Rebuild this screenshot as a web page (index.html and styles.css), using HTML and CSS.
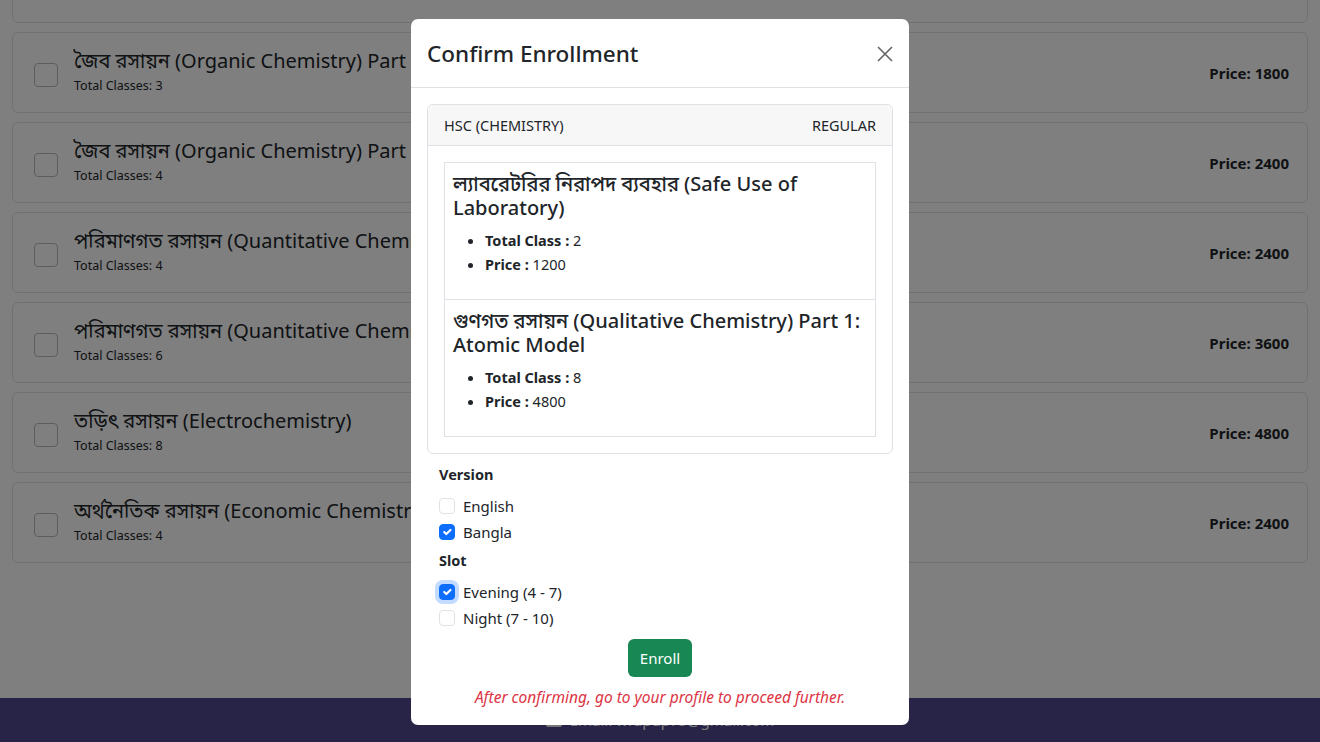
FILE: index.html
```html
<!DOCTYPE html>
<html lang="en">
<head>
  <meta charset="UTF-8">
  <meta name="viewport" content="width=device-width, initial-scale=1.0">
  <title>Course List - Enroll</title>
  <link rel="stylesheet" href="styles.css">
</head>
<body>
  <div class="page">
    <main class="course-list">
      <div class="course-card">
        <span class="box"></span>
        <div class="course-info">
          <div class="course-title">জৈব রসায়ন (Organic Chemistry) Part 1: Basics</div>
          <div class="course-sub">Total Classes: 4</div>
        </div>
        <div class="course-price">Price: 2400</div>
      </div>
      <div class="course-card">
        <span class="box"></span>
        <div class="course-info">
          <div class="course-title">জৈব রসায়ন (Organic Chemistry) Part 2: Reactions</div>
          <div class="course-sub">Total Classes: 3</div>
        </div>
        <div class="course-price">Price: 1800</div>
      </div>
      <div class="course-card">
        <span class="box"></span>
        <div class="course-info">
          <div class="course-title">জৈব রসায়ন (Organic Chemistry) Part 3: Polymers</div>
          <div class="course-sub">Total Classes: 4</div>
        </div>
        <div class="course-price">Price: 2400</div>
      </div>
      <div class="course-card">
        <span class="box"></span>
        <div class="course-info">
          <div class="course-title">পরিমাণগত রসায়ন (Quantitative Chemistry) Part 1</div>
          <div class="course-sub">Total Classes: 4</div>
        </div>
        <div class="course-price">Price: 2400</div>
      </div>
      <div class="course-card">
        <span class="box"></span>
        <div class="course-info">
          <div class="course-title">পরিমাণগত রসায়ন (Quantitative Chemistry) Part 2</div>
          <div class="course-sub">Total Classes: 6</div>
        </div>
        <div class="course-price">Price: 3600</div>
      </div>
      <div class="course-card">
        <span class="box"></span>
        <div class="course-info">
          <div class="course-title">তড়িৎ রসায়ন (Electrochemistry)</div>
          <div class="course-sub">Total Classes: 8</div>
        </div>
        <div class="course-price">Price: 4800</div>
      </div>
      <div class="course-card">
        <span class="box"></span>
        <div class="course-info">
          <div class="course-title">অর্থনৈতিক রসায়ন (Economic Chemistry)</div>
          <div class="course-sub">Total Classes: 4</div>
        </div>
        <div class="course-price">Price: 2400</div>
      </div>
    </main>

    <footer class="site-footer">
      <span class="mail-icon"></span>
      <span>Email: wrapup75@gmail.com</span>
    </footer>
  </div>

  <!-- modal -->
  <div class="backdrop"></div>
  <div class="modal-wrap">
    <div class="modal">
      <div class="modal-header">
        <h2 class="modal-title">Confirm Enrollment</h2>
        <button class="close-btn" aria-label="Close">
          <svg width="16" height="16" viewBox="0 0 16 16">
            <path d="M1 1 L15 15 M15 1 L1 15" stroke="#000" stroke-width="1.6" fill="none"/>
          </svg>
        </button>
      </div>
      <div class="modal-body">
        <div class="summary-card">
          <div class="summary-head">
            <span>HSC (CHEMISTRY)</span>
            <span>REGULAR</span>
          </div>
          <div class="summary-body">
            <div class="chapter">
              <h5>ল্যাবরেটরির নিরাপদ ব্যবহার (Safe Use of Laboratory)</h5>
              <ul>
                <li><b>Total Class :</b> 2</li>
                <li><b>Price :</b> 1200</li>
              </ul>
            </div>
            <div class="chapter">
              <h5>গুণগত রসায়ন (Qualitative Chemistry) Part 1: Atomic Model</h5>
              <ul>
                <li><b>Total Class :</b> 8</li>
                <li><b>Price :</b> 4800</li>
              </ul>
            </div>
          </div>
        </div>

        <div class="options">
          <div class="opt-label">Version</div>
          <label class="check"><input type="checkbox"> English</label>
          <label class="check"><input type="checkbox" checked> Bangla</label>
          <div class="opt-label">Slot</div>
          <label class="check"><input type="checkbox" class="focused" checked> Evening (4 - 7)</label>
          <label class="check"><input type="checkbox"> Night (7 - 10)</label>
          <div class="actions">
            <button class="enroll-btn">Enroll</button>
            <p class="note">After confirming, go to your profile to proceed further.</p>
          </div>
        </div>
      </div>
    </div>
  </div>
</body>
</html>
```

FILE: styles.css
```css
body {
  margin: 0;
  font-family: "Noto Sans", "Noto Sans Bengali", "Lohit Bengali", "FreeSans", sans-serif;
  color: #212529;
  background-color: #fff;
  overflow: hidden;
}

.page {
  height: 742px;
  display: flex;
  flex-direction: column;
  overflow: hidden;
}

.course-list {
  flex: 1;
  padding: 0 12px;
  margin-top: -58px;
}

.course-card {
  display: flex;
  align-items: center;
  height: 81px;
  box-sizing: border-box;
  border: 1px solid #dee2e6;
  border-radius: 6px;
  margin-bottom: 9px;
  padding: 0 18px 0 21px;
}

.box {
  width: 22px;
  height: 22px;
  border: 1px solid #bbb;
  border-radius: 4px;
  margin-right: 16px;
  margin-top: 4px;
  flex-shrink: 0;
}

.course-info {
  flex: 1;
}

.course-title {
  font-size: 20px;
  line-height: 24px;
}

.course-sub {
  font-size: 12.5px;
  line-height: 22px;
  margin-top: 2px;
}

.course-price {
  font-weight: bold;
  font-size: 15px;
}

.site-footer {
  height: 44px;
  background-color: #51498f;
  color: #fff;
  display: flex;
  align-items: center;
  justify-content: center;
  gap: 8px;
  font-size: 15px;
}

.mail-icon {
  width: 16px;
  height: 14px;
  background-color: #eee;
  border-radius: 2px;
}

/* modal */
.backdrop {
  position: fixed;
  inset: 0;
  background-color: rgba(0, 0, 0, 0.5);
}

.modal-wrap {
  position: fixed;
  inset: 0;
  display: flex;
  justify-content: center;
  padding-top: 19px;
}

.modal {
  width: 498px;
  height: 706px;
  box-sizing: border-box;
  background-color: #fff;
  border-radius: 7px;
}

.modal-header {
  display: flex;
  align-items: center;
  justify-content: space-between;
  padding: 17px 16px 15px 16px;
  border-bottom: 1px solid #dee2e6;
}

.modal-title {
  margin: 0;
  font-size: 22.5px;
  font-weight: 500;
  line-height: 36px;
}

.close-btn {
  border: 0;
  background: none;
  padding: 0;
  margin-right: 0;
  opacity: 0.6;
  display: flex;
}

.modal-body {
  padding: 16px;
}

.summary-card {
  border: 1px solid #dee2e6;
  border-radius: 6px;
}

.summary-head {
  display: flex;
  justify-content: space-between;
  padding: 8px 16px;
  font-size: 14.5px;
  line-height: 24px;
  background-color: #f7f7f7;
  border-bottom: 1px solid #dee2e6;
  border-radius: 6px 6px 0 0;
}

.summary-body {
  padding: 16px;
}

.chapter {
  border: 1px solid #dee2e6;
  padding: 9px 8px 7px;
}

.chapter + .chapter {
  margin-top: -1px;
}

.chapter h5 {
  margin: 0 0 8px;
  font-size: 20px;
  font-weight: 500;
  line-height: 24px;
}

.chapter ul {
  margin: 0 0 16px;
  padding-left: 32px;
  font-size: 14.5px;
  line-height: 24px;
}

.options {
  padding: 0 12px;
  margin-top: 8px;
}

.opt-label {
  font-weight: bold;
  font-size: 14.5px;
  line-height: 24px;
  margin-bottom: 8px;
}

.check + .opt-label {
  margin-top: 4px;
}

.check {
  display: flex;
  align-items: center;
  gap: 8px;
  min-height: 24px;
  margin-bottom: 2px;
  font-size: 15px;
}

.check input {
  appearance: none;
  width: 16px;
  height: 16px;
  margin: 0;
  border: 1px solid #dee2e6;
  border-radius: 4px;
  background-color: #fff;
}

.check input:checked {
  border-color: #0d6efd;
  background-color: #0d6efd;
  background-image: url("data:image/svg+xml,%3csvg xmlns='http://www.w3.org/2000/svg' viewBox='0 0 20 20'%3e%3cpath fill='none' stroke='%23fff' stroke-linecap='round' stroke-linejoin='round' stroke-width='3' d='m6 10 3 3 6-6'/%3e%3c/svg%3e");
  background-size: 100% 100%;
}

.check input.focused {
  box-shadow: 0 0 0 4px rgba(13, 110, 253, 0.25);
}

.actions {
  text-align: center;
  margin-top: 9px;
}

.enroll-btn {
  font-family: inherit;
  font-size: 15px;
  color: #fff;
  background-color: #198754;
  border: 0;
  border-radius: 6px;
  height: 38px;
  padding: 0 12px;
}

.note {
  margin: 8px 0 0;
  color: #dc3545;
  font-style: italic;
  font-size: 15.5px;
  line-height: 24px;
}
```
